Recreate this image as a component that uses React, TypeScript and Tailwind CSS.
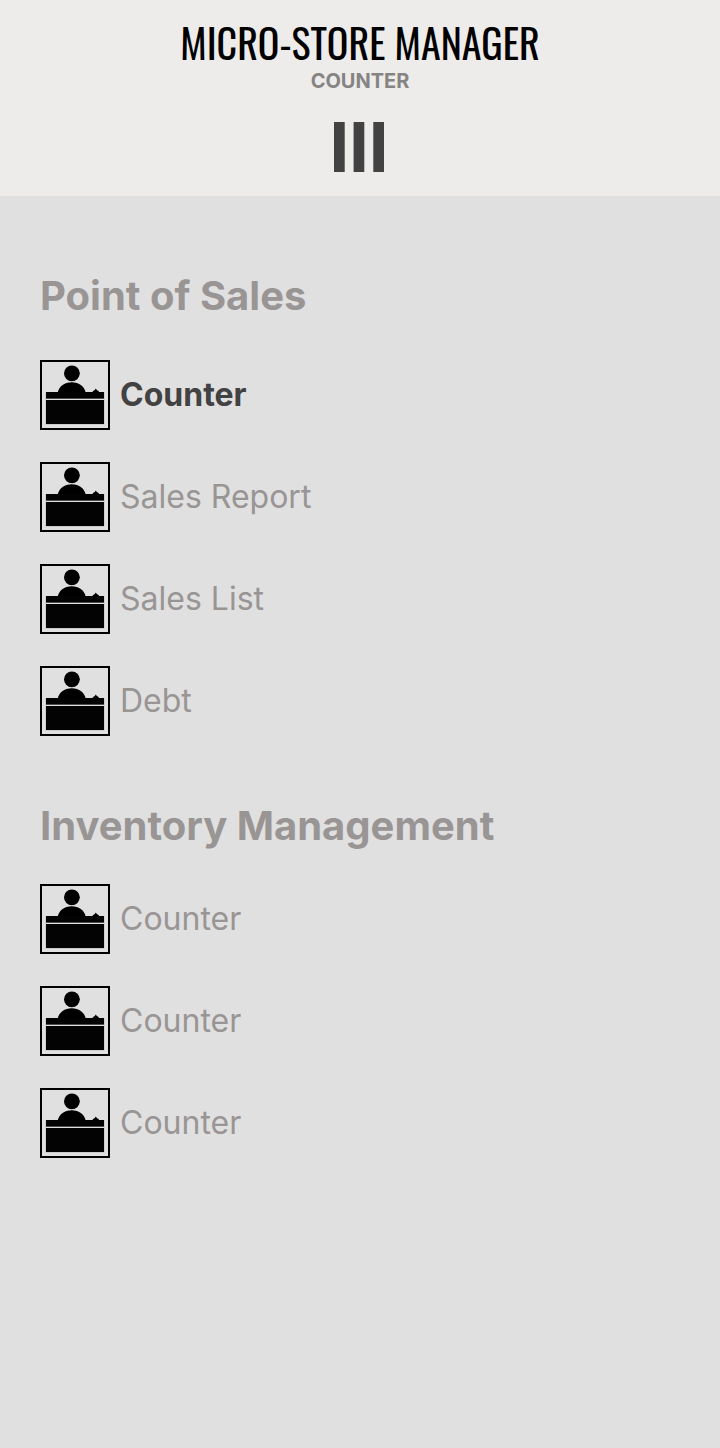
type MenuItem = { label: string; active?: boolean };

const salesItems: MenuItem[] = [
  { label: "Counter", active: true },
  { label: "Sales Report" },
  { label: "Sales List" },
  { label: "Debt" },
];

const inventoryItems: MenuItem[] = [
  { label: "Counter" },
  { label: "Counter" },
  { label: "Counter" },
];

function CounterIcon() {
  return (
    <svg viewBox="0 0 70 70" className="size-[70px] shrink-0" aria-hidden="true">
      <rect x="1" y="1" width="68" height="68" fill="none" stroke="#000" strokeWidth="2" />
      <rect x="5.5" y="32" width="59" height="32.6" fill="#bdbdbd" />
      <circle cx="31.9" cy="13.3" r="7.9" />
      <path d="M17.6 33C18.6 26.6 24.3 22.2 31.7 22.2S44.8 26.6 45.8 33Z" />
      <path d="M52.2 33L53 30.9L54.8 30L55.8 28.4L56.8 30L58.6 30.9L59.4 33Z" />
      <rect x="6" y="32" width="58" height="6.6" fill="#030303" />
      <rect x="6" y="39" width="58" height="1" fill="#e0e0e0" />
      <rect x="6" y="40" width="58" height="24" fill="#030303" />
    </svg>
  );
}

function MenuList({ items }: { items: MenuItem[] }) {
  return (
    <ul className="flex flex-col gap-8">
      {items.map((item, index) => (
        <li key={index}>
          <a
            href="#"
            aria-current={item.active ? "page" : undefined}
            className={
              item.active
                ? "flex items-center gap-2.5 text-[32px] leading-10 font-bold text-[#424242]"
                : "flex items-center gap-2.5 text-[32px] leading-10 text-[#999594]"
            }
          >
            <CounterIcon />
            <span>{item.label}</span>
          </a>
        </li>
      ))}
    </ul>
  );
}

export default function App() {
  return (
    <div className="flex min-h-screen flex-col bg-[#e0e0e0] font-['Inter',sans-serif]">
      <header className="flex flex-col items-center bg-[#edecea] pt-[18px] pb-6">
        <h1 className="text-[40px] leading-[48px] whitespace-nowrap text-black font-['Oswald','Roboto_Condensed','Liberation_Sans_Narrow',sans-serif]">
          MICRO-STORE MANAGER
        </h1>
        <p className="text-xl leading-[30px] font-bold text-[#858483]">COUNTER</p>
        <button type="button" aria-label="Toggle menu" className="mt-[26px]">
          <svg viewBox="0 0 50 50" className="mr-0.5 size-[50px]" fill="#424242" aria-hidden="true">
            <rect x="0" width="10.7" height="50" />
            <rect x="19.6" width="10.7" height="50" />
            <rect x="39.3" width="10.7" height="50" />
          </svg>
        </button>
      </header>
      <nav className="flex flex-col gap-[66px] px-10 pt-[76px] pb-10">
        <section className="flex flex-col gap-10">
          <h2 className="text-[40px] leading-[48px] font-bold text-[#999594]">Point of Sales</h2>
          <MenuList items={salesItems} />
        </section>
        <section className="flex flex-col gap-[34px]">
          <h2 className="text-[40px] leading-[48px] font-bold text-[#999594]">Inventory Management</h2>
          <MenuList items={inventoryItems} />
        </section>
      </nav>
    </div>
  );
}
